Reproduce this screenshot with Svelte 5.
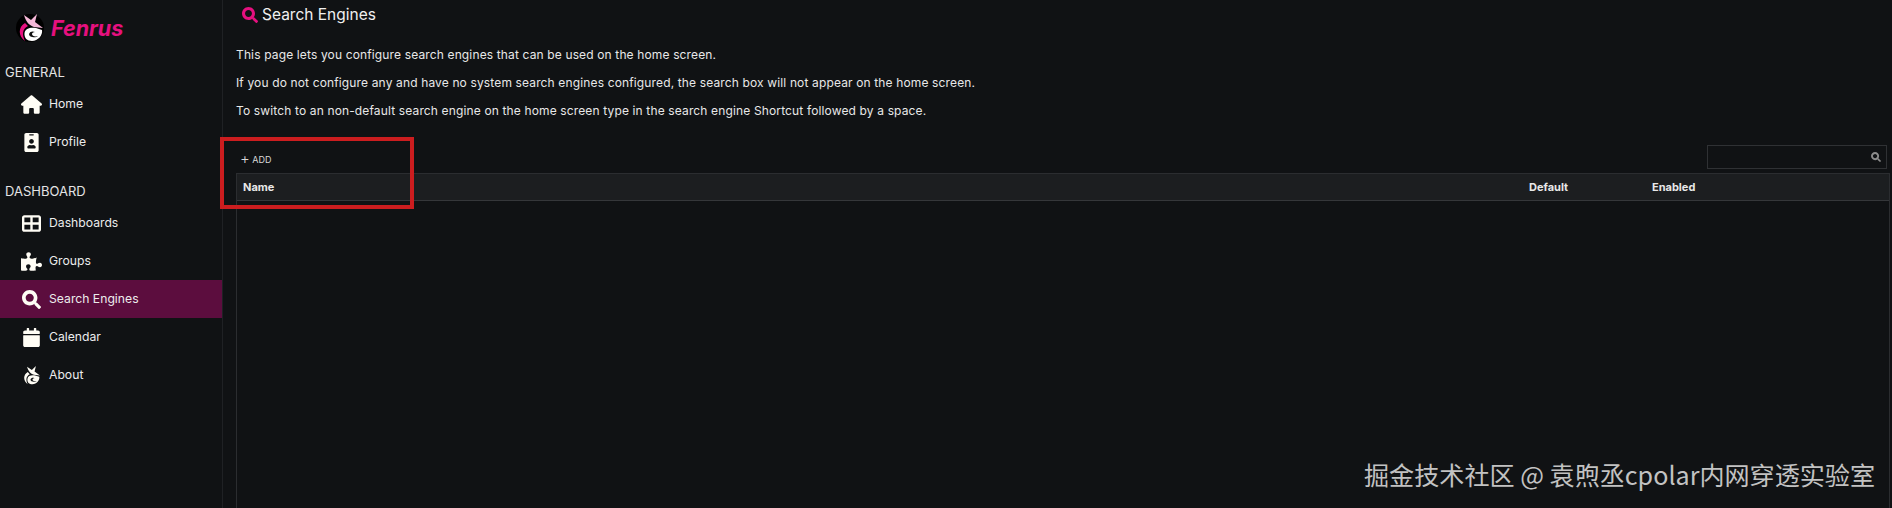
<script>
  const icons = {
    home: { box: "0 0 576 512", d: "M575.8 255.5c0 18-15 32.1-32 32.1h-32l.7 160.2c0 2.7-.2 5.4-.5 8.1V472c0 22.1-17.9 40-40 40H456c-1.1 0-2.2 0-3.3-.1c-1.4 .1-2.8 .1-4.2 .1H416 392c-22.1 0-40-17.9-40-40V448 384c0-17.7-14.3-32-32-32H256c-17.7 0-32 14.3-32 32v64 24c0 22.1-17.9 40-40 40H160 128.1c-1.5 0-3-.1-4.5-.2c-1.2 .1-2.4 .2-3.6 .2H104c-22.1 0-40-17.9-40-40V360c0-.9 0-1.9 .1-2.8V287.6H32c-18 0-32-14-32-32.1c0-9 3-17 10-24L266.4 8c7-7 15-8 22-8s15 2 21 7L564.8 231.5c8 7 12 15 11 24z" },
    profile: { box: "0 0 384 512", d: "M336 0H48C21.5 0 0 21.5 0 48v416c0 26.5 21.5 48 48 48h288c26.5 0 48-21.5 48-48V48c0-26.5-21.5-48-48-48zM144 32h96c8.8 0 16 7.2 16 16s-7.2 16-16 16h-96c-8.8 0-16-7.2-16-16s7.2-16 16-16zm48 128c35.3 0 64 28.7 64 64s-28.7 64-64 64-64-28.7-64-64 28.7-64 64-64zm112 236.8c0 10.6-10 19.2-22.4 19.2H102.4C90 416 80 407.4 80 396.8v-19.2c0-31.8 30.1-57.6 67.2-57.6h5c12.3 5.1 25.7 8 39.8 8s27.6-2.9 39.8-8h5c37.1 0 67.2 25.8 67.2 57.6v19.2z" },
    grid: { box: "0 0 512 512", d: "M448 96V224H288V96H448zm0 192V416H288V288H448zM224 224H64V96H224V224zM64 288H224V416H64V288zM64 32C28.7 32 0 60.7 0 96V416c0 35.3 28.7 64 64 64H448c35.3 0 64-28.7 64-64V96c0-35.3-28.7-64-64-64H64z" },
    puzzle: { box: "0 0 576 512", d: "M519.442 288.651c-41.519 0-59.5 31.593-82.058 31.593C377.409 320.244 432 144 432 144s-196.288 80-196.288-3.297c0-35.827 36.288-46.25 36.288-85.985C272 19.216 243.885 0 210.539 0c-34.654 0-66.366 18.891-66.366 56.346 0 41.364 31.711 59.277 31.711 81.75C175.885 207.719 0 166.758 0 166.758v333.237s178.635 41.047 178.635-28.662c0-22.473-40-40.107-40-81.471 0-37.456 29.25-56.346 63.577-56.346 33.673 0 61.788 19.216 61.788 54.717 0 39.735-36.288 50.158-36.288 85.985 0 60.803 129.675 25.73 181.23 25.73 0 0-34.725-120.101 25.827-120.101 35.962 0 46.423 36.152 86.308 36.152C556.712 416 576 387.99 576 354.443c0-34.199-18.962-65.792-56.558-65.792z" },
    search: { box: "0 0 512 512", d: "M505 442.7L405.3 343c-4.5-4.5-10.6-7-17-7H372c27.6-35.3 44-79.7 44-128C416 93.1 322.9 0 208 0S0 93.1 0 208s93.1 208 208 208c48.3 0 92.7-16.4 128-44v16.3c0 6.4 2.5 12.5 7 17l99.7 99.7c9.4 9.4 24.6 9.4 33.9 0l28.300-28.300c9.400-9.400 9.400-24.600.1-34zM208 318c-60.800 0-110-49.200-110-110S147.200 98 208 98s110 49.200 110 110-49.200 110-110 110z" },
    calendar: { box: "0 0 448 512", d: "M12 192h424c6.6 0 12 5.4 12 12v260c0 26.5-21.5 48-48 48H48c-26.5 0-48-21.5-48-48V204c0-6.6 5.4-12 12-12zm436-44v-36c0-26.5-21.5-48-48-48h-48V12c0-6.6-5.4-12-12-12h-40c-6.6 0-12 5.4-12 12v52H160V12c0-6.6-5.4-12-12-12h-40c-6.6 0-12 5.4-12 12v52H48C21.5 64 0 85.5 0 112v36c0 6.6 5.4 12 12 12h424c6.6 0 12-5.4 12-12z" },
    fox: { box: "2 1 27 28", d: "M9 2L16 7L22 1L20 9L24 12L28 15L19 14C14 12 11 9 9 2ZM10 10C3 14 3 23 10 28C7 22 7 16 13 13ZM9.5 20C10 15 16 14 21 15L27 17C28 22 23 28 17 28C12 28 9 25 9.500 20ZM14 21C15 18 18 18 20 19C18 19 17 20 17 21C17 23 20 24 23 23C21 25 14 25 14 21Z" },
  };

  const sections = [
    { title: "GENERAL", items: [
      { label: "Home", icon: "home" },
      { label: "Profile", icon: "profile" },
    ] },
    { title: "DASHBOARD", items: [
      { label: "Dashboards", icon: "grid" },
      { label: "Groups", icon: "puzzle" },
      { label: "Search Engines", icon: "search", active: true },
      { label: "Calendar", icon: "calendar" },
      { label: "About", icon: "fox" },
    ] },
  ];
</script>

<div class="page">
  <aside>
    <div class="brand">
      <svg class="logo" viewBox="0 0 30 30">
        <circle cx="15" cy="15" r="14" fill="#000" />
        <path d="M9 2L16 7L22 1L20 9L24 12L28 15L19 14C14 12 11 9 9 2Z" fill="#f5b8d8" />
        <path d="M10 10C3 14 3 23 10 28C7 22 7 16 13 13Z" fill="#e6107f" />
        <path d="M9.500 20C10 15 16 14 21 15L27 17C28 22 23 28 17 28C12 28 9 25 9.500 20Z" fill="#fff" />
        <path d="M14 21C15 18 18 18 20 19C18 19 17 20 17 21C17 23 20 24 23 23C21 25 14 25 14 21Z" fill="#111" />
      </svg>
      <span class="name">Fenrus</span>
    </div>
    {#each sections as section}
      <div class="section">{section.title}</div>
      <nav>
        {#each section.items as item}
          <div class="item" class:active={item.active}>
            <span class="ico">
              <svg viewBox={icons[item.icon].box}><path d={icons[item.icon].d} fill="currentColor" fill-rule="evenodd" /></svg>
            </span>
            <span>{item.label}</span>
          </div>
        {/each}
      </nav>
    {/each}
  </aside>

  <main>
    <h1>
      <svg viewBox={icons.search.box}><path d={icons.search.d} fill="currentColor" /></svg>
      <span>Search Engines</span>
    </h1>
    <p>This page lets you configure search engines that can be used on the home screen.</p>
    <p>If you do not configure any and have no system search engines configured, the search box will not appear on the home screen.</p>
    <p>To switch to an non-default search engine on the home screen type in the search engine Shortcut followed by a space.</p>

    <div class="toolbar">
      <button class="add"><span class="plus">+</span> ADD</button>
      <div class="filter">
        <svg viewBox={icons.search.box}><path d={icons.search.d} fill="currentColor" /></svg>
      </div>
    </div>
    <div class="table">
      <div class="head">
        <span class="col-name">Name</span>
        <span class="col-default">Default</span>
        <span class="col-enabled">Enabled</span>
      </div>
    </div>
  </main>

  <div class="marker"></div>
  <div class="watermark">掘金技术社区 @ 袁煦丞cpolar内网穿透实验室</div>
</div>

<style>
  :global(body) {
    background: #101214;
    color: #f0f0f0;
    font-family: "Inter", "Liberation Sans", sans-serif;
    overflow: hidden;
  }

  .page {
    display: flex;
    height: 508px;
    position: relative;
    overflow: hidden;
  }

  aside {
    width: 222px;
    flex: none;
    border-right: 1px solid #1f2124;
    font-size: 12.2px;
  }

  .brand {
    display: flex;
    align-items: center;
    gap: 6px;
    padding: 13px 0 0 15px;
    height: 30px;
  }

  .logo {
    width: 30px;
    height: 30px;
  }

  .name {
    color: #e6107f;
    font-size: 21.500px;
    font-weight: 700;
    font-style: italic;
  }

  .section {
    font-size: 13px;
    color: #e4e4e4;
    padding-left: 5px;
    line-height: 16px;
    margin-top: 21px;
  }

  .section:nth-of-type(n + 3) {
    margin-top: 22px;
  }

  nav {
    margin-top: 5px;
  }

  .item {
    height: 38px;
    display: flex;
    align-items: center;
    padding-left: 21px;
    gap: 7px;
    color: #ececec;
  }

  .item span:last-child {
    position: relative;
    top: -1px;
  }

  .item.active {
    background: #5c0d3e;
  }

  .ico {
    width: 21px;
    height: 20px;
    display: flex;
    align-items: center;
    justify-content: center;
    color: #fffdf5;
  }

  .ico svg {
    height: 19px;
    width: 21px;
    flex: none;
  }

  main {
    flex: 1;
    min-width: 0;
    padding: 0 2px 0 13px;
  }

  h1 {
    margin: 0 0 23px;
    display: flex;
    align-items: center;
    gap: 4px;
    padding: 6px 0 0 6px;
    font-size: 15.500px;
    line-height: 18px;
    font-weight: 400;
  }

  h1 svg {
    width: 16px;
    height: 16px;
    color: #e6107f;
  }

  p {
    margin: 0 0 13px;
    font-size: 12px;
    letter-spacing: 0.14px;
    line-height: 15px;
    color: #e8e8e8;
  }

  .toolbar {
    display: flex;
    justify-content: space-between;
    align-items: flex-end;
    margin-top: 22px;
    padding-right: 3px;
    height: 29px;
    margin-bottom: 4px;
  }

  .add {
    background: none;
    border: 0;
    color: #d8d8d8;
    font: inherit;
    font-size: 9px;
    padding: 0 0 2px 4px;
    line-height: 14px;
  }

  .plus {
    font-size: 15px;
    line-height: 14px;
    font-weight: 300;
    vertical-align: -1px;
  }

  .filter {
    width: 180px;
    height: 24px;
    border: 1px solid #2f3134;
    display: flex;
    align-items: center;
    justify-content: flex-end;
    padding-right: 5px;
    box-sizing: border-box;
    color: #8c8c8c;
  }

  .filter svg {
    width: 10px;
    height: 10px;
  }

  .table {
    height: 400px;
    border: 1px solid #2b2d30;
    border-bottom: 0;
  }

  .head {
    height: 26px;
    background: #1c1e20;
    border-bottom: 1px solid #35373a;
    display: grid;
    grid-template-columns: 1292px 123px 1fr;
    align-items: center;
    font-size: 11px;
    font-weight: 700;
    color: #e8e8e8;
  }

  .col-name {
    padding-left: 6px;
  }

  .marker {
    position: absolute;
    left: 220px;
    top: 137px;
    width: 194px;
    height: 72px;
    box-sizing: border-box;
    border: 4px solid #cc1d1f;
  }

  .watermark {
    position: absolute;
    left: 1364px;
    top: 457px;
    font-family: "Noto Sans CJK SC", sans-serif;
    font-size: 25.100px;
    line-height: 34px;
    color: #c2c2c2;
    white-space: nowrap;
  }
</style>
